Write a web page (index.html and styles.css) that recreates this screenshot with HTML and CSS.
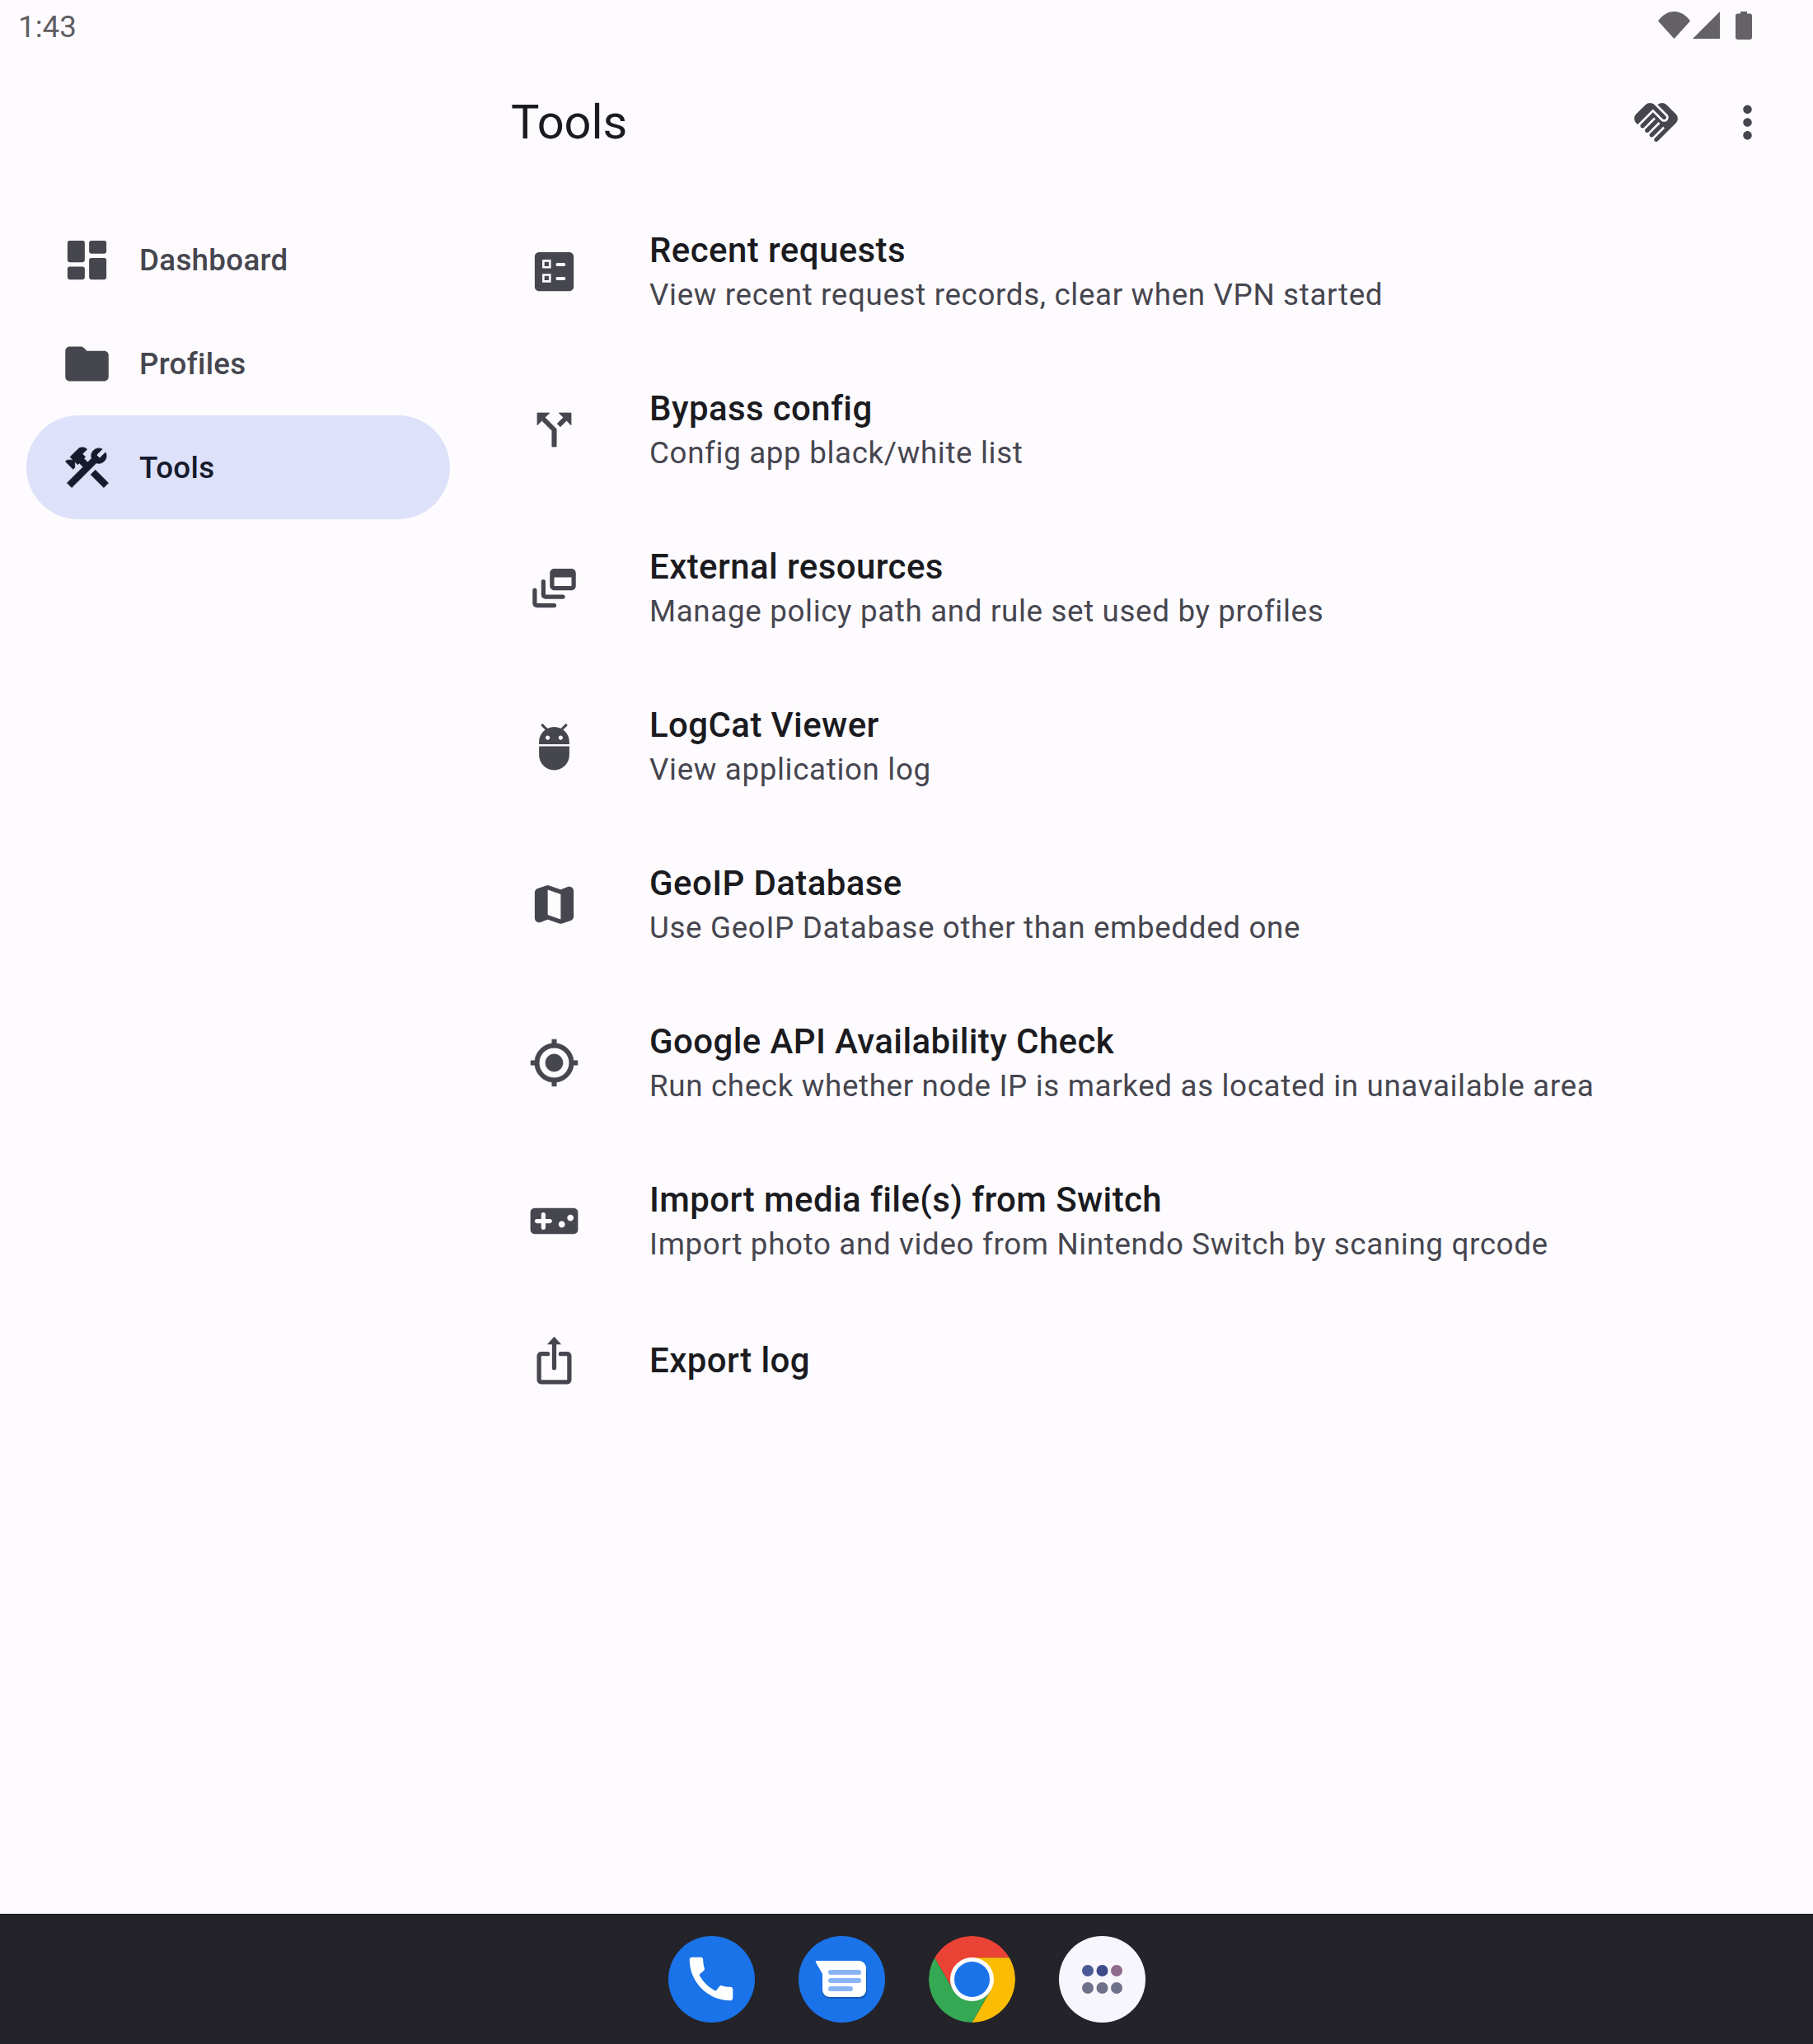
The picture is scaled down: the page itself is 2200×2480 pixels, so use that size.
FILE: index.html
```html
<!DOCTYPE html>
<html lang="en">
<head>
<meta charset="utf-8">
<title>Tools</title>
<link rel="stylesheet" href="styles.css">
</head>
<body>
<div class="screen">
  <header class="status">
    <span class="clock">1:43</span>
    <div class="status-icons">
      <svg class="st-wifi" viewBox="0 0 39 33"><path d="M0 11.5C5 4.500 11.500 0 19.500 0S34 4.500 39 11.500L19.500 33z"/></svg>
      <svg class="st-signal" viewBox="0 0 33 33"><path d="M33 0v33H0z"/></svg>
      <svg class="st-battery" viewBox="0 0 20 34"><path d="M6 0h8v2.500h3.500c1.400 0 2.500 1.100 2.500 2.500v26.500c0 1.400-1.100 2.500-2.500 2.500h-15C1.100 34 0 32.900 0 31.500V5c0-1.400 1.100-2.500 2.500-2.500H6z"/></svg>
    </div>
  </header>
  <div class="main">
    <nav class="rail">
      <a class="nav-item">
        <svg class="icon" viewBox="0 0 24 24"><path d="M4 13h6c.55 0 1-.45 1-1V4c0-.55-.45-1-1-1H4c-.55 0-1 .45-1 1v8c0 .55.45 1 1 1zm0 8h6c.55 0 1-.45 1-1v-4c0-.55-.45-1-1-1H4c-.55 0-1 .45-1 1v4c0 .55.45 1 1 1zm10 0h6c.55 0 1-.45 1-1v-8c0-.55-.45-1-1-1h-6c-.55 0-1 .45-1 1v8c0 .55.45 1 1 1zM13 4v4c0 .55.45 1 1 1h6c.55 0 1-.45 1-1V4c0-.55-.45-1-1-1h-6c-.55 0-1 .45-1 1z"/></svg>
        <span>Dashboard</span>
      </a>
      <a class="nav-item">
        <svg class="icon" viewBox="0 0 24 24"><path d="M10.590 4.590C10.210 4.210 9.700 4 9.170 4H4c-1.100 0-1.990.9-1.990 2L2 18c0 1.100.9 2 2 2h16c1.100 0 2-.9 2-2V8c0-1.100-.9-2-2-2h-8l-1.410-1.410z"/></svg>
        <span>Profiles</span>
      </a>
      <a class="nav-item active">
        <svg class="icon rounded" viewBox="0 0 24 24"><path d="M13.783 15.172l2.121-2.121 5.996 5.996-2.121 2.121zM17.500 10c1.930 0 3.500-1.570 3.500-3.500 0-.58-.16-1.120-.41-1.600l-2.700 2.700-1.490-1.490 2.700-2.700c-.48-.25-1.020-.41-1.600-.41C15.570 3 14 4.570 14 6.500c0 .41.08.8.21 1.160l-1.850 1.850-1.780-1.780.71-.71-1.410-1.410L12 3.490c-1.170-1.170-3.070-1.170-4.240 0L4.220 7.030l1.410 1.410H2.810l-.71.71 3.540 3.540.71-.71V9.150l1.410 1.410.71-.71 1.780 1.780-7.410 7.410 2.120 2.120L16.340 9.790c.36.13.75.21 1.160.21z"/></svg>
        <span>Tools</span>
      </a>
    </nav>
    <div class="content">
      <div class="appbar">
        <h1 class="page-title">Tools</h1>
        <svg class="icon action-hand" viewBox="0 0 24 24"><path d="M16.480 10.410c-.39.39-1.040.39-1.430 0l-4.470-4.460-7.050 7.040-.66-.63c-1.170-1.170-1.170-3.070 0-4.240l4.240-4.240c1.170-1.170 3.070-1.170 4.240 0L16.480 9c.4.39.4 1.020 0 1.410zM17.180 8.290c.78.78.78 2.050 0 2.830-1.270 1.270-2.610.22-2.830 0l-3.760-3.760-5.570 5.570c-.39.39-.39 1.020 0 1.410.39.39 1.020.39 1.420 0l4.620-4.620.71.71-4.620 4.620c-.39.39-.39 1.020 0 1.410.39.39 1.020.39 1.420 0l4.620-4.620.71.71-4.620 4.620c-.39.39-.39 1.020 0 1.410.39.39 1.020.39 1.410 0l4.620-4.620.71.71-4.620 4.620c-.39.39-.39 1.020 0 1.410.39.39 1.020.39 1.410 0l8.320-8.340c1.170-1.170 1.170-3.070 0-4.240l-4.240-4.240c-1.150-1.150-3.010-1.170-4.180-.06L17.180 8.290z"/></svg>
        <svg class="icon action-more" viewBox="0 0 24 24"><path d="M12 8c1.100 0 2-.9 2-2s-.9-2-2-2-2 .9-2 2 .9 2 2 2zm0 2c-1.100 0-2 .9-2 2s.9 2 2 2 2-.9 2-2-.9-2-2-2zm0 6c-1.100 0-2 .9-2 2s.9 2 2 2 2-.9 2-2-.9-2-2-2z"/></svg>
      </div>
      <ul class="list">
        <li class="row">
          <svg class="icon" viewBox="0 0 24 24"><path fill-rule="evenodd" d="M5 3h14c1.100 0 2 .9 2 2v14c0 1.100-.9 2-2 2H5c-1.100 0-2-.9-2-2V5c0-1.100.9-2 2-2zm1.500 3.500v4h4v-4zm1 1h2v2h-2zm-1 5.500v4h4v-4zm1 1h2v2h-2zM13.500 8a.75.75 0 0 0 0 1.500h3a.75.75 0 0 0 0-1.500zm0 6.500a.75.75 0 0 0 0 1.500h3a.75.75 0 0 0 0-1.500z"/></svg>
          <div class="text"><div class="title">Recent requests</div><div class="sub">View recent request records, clear when VPN started</div></div>
        </li>
        <li class="row">
          <svg class="icon rounded" viewBox="0 0 24 24"><path d="M14.200 4.200l2.090 2.090-2.880 2.880 1.420 1.420 2.880-2.880L19.800 9.800V4.200zM9.800 4.200H4.200v5.600l2.090-2.090 4.710 4.700V19.800h2v-8.210l-5.290-5.300L9.800 4.200z"/></svg>
          <div class="text"><div class="title">Bypass config</div><div class="sub">Config app black/white list</div></div>
        </li>
        <li class="row">
          <svg class="icon" viewBox="0 0 24 24"><path fill-rule="evenodd" d="M12 3h8c1.100 0 2 .9 2 2v6c0 1.100-.9 2-2 2h-8c-1.100 0-2-.9-2-2V5c0-1.100.9-2 2-2zm0 4v4h8V7z"/><path class="line" d="M7 9v6c0 .6.4 1 1 1h8"/><path class="line" d="M3 13v6c0 .6.4 1 1 1h8"/></svg>
          <div class="text"><div class="title">External resources</div><div class="sub">Manage policy path and rule set used by profiles</div></div>
        </li>
        <li class="row">
          <svg class="icon" viewBox="0 0 24 24"><path d="M5 16c0 3.870 3.130 7 7 7s7-3.130 7-7v-4H5v4zM16.120 4.370l2.100-2.100-.82-.83-2.300 2.310C14.160 3.280 13.120 3 12 3s-2.160.28-3.090.75L6.600 1.440l-.82.83 2.100 2.100C6.140 5.640 5 7.680 5 10v1h14v-1c0-2.320-1.140-4.360-2.880-5.630zM9 9c-.55 0-1-.45-1-1s.45-1 1-1 1 .45 1 1-.45 1-1 1zm6 0c-.55 0-1-.45-1-1s.45-1 1-1 1 .45 1 1-.45 1-1 1z"/></svg>
          <div class="text"><div class="title">LogCat Viewer</div><div class="sub">View application log</div></div>
        </li>
        <li class="row">
          <svg class="icon" viewBox="0 0 24 24"><path fill-rule="evenodd" d="M14.650 4.980l-5-1.750c-.42-.15-.88-.15-1.300-.01L4.360 4.560C3.550 4.840 3 5.600 3 6.460v11.850c0 1.410 1.410 2.370 2.720 1.860l2.930-1.140c.22-.09.47-.09.69-.01l5 1.750c.42.15.88.15 1.300.01l3.990-1.340c.81-.27 1.360-1.040 1.360-1.900V5.690c0-1.410-1.410-2.370-2.720-1.860l-2.930 1.140c-.22.08-.46.09-.69.01zM15 18.890l-6-2.110V5.110l6 2.110v11.670z"/></svg>
          <div class="text"><div class="title">GeoIP Database</div><div class="sub">Use GeoIP Database other than embedded one</div></div>
        </li>
        <li class="row">
          <svg class="icon rounded" viewBox="0 0 24 24"><path d="M12 8c-2.210 0-4 1.790-4 4s1.790 4 4 4 4-1.790 4-4-1.790-4-4-4zm8.940 3c-.46-4.170-3.770-7.480-7.940-7.940V1.200h-2v1.860C6.830 3.520 3.520 6.830 3.060 11H1.200v2h1.860c.46 4.170 3.770 7.480 7.940 7.940v1.860h2v-1.860c4.170-.46 7.480-3.770 7.940-7.940h1.860v-2h-1.860zM12 19c-3.870 0-7-3.130-7-7s3.130-7 7-7 7 3.130 7 7-3.130 7-7 7z"/></svg>
          <div class="text"><div class="title">Google API Availability Check</div><div class="sub">Run check whether node IP is marked as located in unavailable area</div></div>
        </li>
        <li class="row">
          <svg class="icon" viewBox="0 0 24 24"><path d="M21 6H3c-1.100 0-2 .9-2 2v8c0 1.100.9 2 2 2h18c1.100 0 2-.9 2-2V8c0-1.100-.9-2-2-2zm-11 7H8v2c0 .55-.45 1-1 1s-1-.45-1-1v-2H4c-.55 0-1-.45-1-1s.45-1 1-1h2V9c0-.55.45-1 1-1s1 .45 1 1v2h2c.55 0 1 .45 1 1s-.45 1-1 1zm5.500 2c-.83 0-1.500-.67-1.500-1.500s.67-1.500 1.500-1.500 1.500.67 1.500 1.500-.67 1.500-1.500 1.500zm4-3c-.83 0-1.500-.67-1.500-1.500S18.670 9 19.500 9s1.500.67 1.500 1.500-.67 1.500-1.500 1.500z"/></svg>
          <div class="text"><div class="title">Import media file(s) from Switch</div><div class="sub">Import photo and video from Nintendo Switch by scaning qrcode</div></div>
        </li>
        <li class="row">
          <svg class="icon" viewBox="0 0 24 24"><path class="line" d="M12 15.500V3"/><path d="M8.700 4.700L12 1l3.300 3.700z"/><path class="line" d="M9 9H6c-.6 0-1 .4-1 1v11c0 .6.4 1 1 1h12c.6 0 1-.4 1-1V10c0-.6-.4-1-1-1h-3"/></svg>
          <div class="text"><div class="title">Export log</div></div>
        </li>
      </ul>
    </div>
  </div>
  <footer class="dock">
    <div class="app app-blue">
      <svg class="dock-glyph" viewBox="0 0 24 24"><path d="M20.010 15.380c-1.230 0-2.420-.2-3.530-.56a.977.977 0 0 0-1.010.24l-1.570 1.970c-2.830-1.350-5.480-3.900-6.890-6.830l1.950-1.660c.27-.28.35-.67.24-1.020-.37-1.110-.56-2.300-.56-3.530 0-.54-.45-.99-.99-.99H4.190C3.650 3 3 3.240 3 3.990 3 13.280 10.730 21 20.010 21c.71 0 .99-.63.99-1.180v-3.450c0-.54-.45-.99-.99-.99z"/></svg>
    </div>
    <div class="app app-blue">
      <svg class="dock-msg" viewBox="0 0 62 44"><path class="msg-shadow" d="M8 6h46c4 0 8 4 8 8v24c0 4-3 8-8 8H16c-4 0-8-4-8-8V18z"/><path class="msg-body" d="M1 0h51c5 0 9 4 9 9v26c0 5-4 9-9 9H17c-5 0-9-4-9-9V16L0 2c-.5-1 0-2 1-2z"/><rect class="msg-bar" x="15" y="11" width="40" height="6" rx="3"/><rect class="msg-bar" x="15" y="21" width="40" height="6" rx="3"/><rect class="msg-bar" x="15" y="31" width="30" height="6" rx="3"/></svg>
    </div>
    <div class="app">
      <svg class="dock-full" viewBox="-52.500 -52.500 105 105">
        <path class="ch-red" d="M-45.470-26.250A52.500 52.500 0 0 1 45.470-26.250L0-26.250-22.730 13.120z"/>
        <path class="ch-yellow" transform="rotate(120)" d="M-45.470-26.250A52.500 52.500 0 0 1 45.470-26.250L0-26.250-22.730 13.120z"/>
        <path class="ch-green" transform="rotate(240)" d="M-45.470-26.250A52.500 52.500 0 0 1 45.470-26.250L0-26.250-22.730 13.120z"/>
        <circle class="ch-white" r="26.500"/><circle class="ch-blue" r="21.500"/>
      </svg>
    </div>
    <div class="app app-light">
      <svg class="dock-full" viewBox="-52.500 -52.500 105 105">
        <circle class="d1" cx="-17.500" cy="-10.500" r="7"/><circle class="d2" cy="-10.500" r="7"/><circle class="d3" cx="17.500" cy="-10.500" r="7"/>
        <circle class="d4" cx="-17.500" cy="10.500" r="7"/><circle class="d4" cy="10.500" r="7"/><circle class="d4" cx="17.500" cy="10.500" r="7"/>
      </svg>
    </div>
  </footer>
</div>
</body>
</html>
```

FILE: styles.css
```css
* { box-sizing: border-box; }
html, body { margin: 0; padding: 0; }
body { background: #fefbff; font-family: Roboto, "Noto Sans", sans-serif; color: #1b1b1f; }
.screen { width: 2200px; height: 2480px; display: flex; flex-direction: column; overflow: hidden; }

.status { height: 66px; display: flex; justify-content: space-between; padding: 14px 74px 0 22px; flex: none; }
.clock { font-size: 36.750px; line-height: 38px; color: #5f5e62; }
.status-icons { display: flex; align-items: flex-start; }
.status-icons svg { fill: #646266; display: block; }
.st-wifi { width: 39px; height: 33px; }
.st-signal { width: 33px; height: 33px; margin-left: 3px; }
.st-battery { width: 20px; height: 34px; margin-left: 19px; }

.main { flex: 1; display: flex; min-height: 0; }
.rail { width: 578px; flex: none; padding: 186px 32px 0; display: flex; flex-direction: column; }
.nav-item { height: 126px; width: 514px; border-radius: 63px; display: flex; align-items: center; padding-left: 42px; gap: 32px; font-size: 36.750px; font-weight: 500; letter-spacing: .3px; color: #46464f; }
.nav-item.active { background: #dde1f9; color: #171a2c; }
.nav-item.active .icon { fill: #171a2c; stroke: #171a2c; }

.icon { width: 63px; height: 63px; flex: none; fill: #46464f; display: block; }
.icon.rounded { stroke: #46464f; stroke-width: .3; stroke-linejoin: round; }
.icon .line { fill: none; stroke: #46464f; stroke-width: 2; stroke-linecap: round; stroke-linejoin: round; }

.content { flex: 1; min-width: 0; display: flex; flex-direction: column; }
.appbar { height: 164px; flex: none; display: flex; align-items: center; padding: 0 48px 0 42px; }
.page-title { margin: 0; flex: 1; font-size: 57.750px; font-weight: 400; color: #1b1b1f; }
.action-hand { margin-right: 48px; }

.list { list-style: none; margin: 0; padding: 0; }
.row { display: flex; padding: 45px 0 39px 63px; align-items: center; gap: 84px; }
.title { font-size: 42px; font-weight: 500; line-height: 58px; letter-spacing: .4px; color: #1b1b1f; }
.sub { font-size: 36.750px; line-height: 50px; letter-spacing: .65px; color: #46464f; }

.dock { height: 158px; flex: none; background: #242329; display: flex; justify-content: center; align-items: center; gap: 53px; }
.app { width: 105px; height: 105px; border-radius: 50%; display: flex; align-items: center; justify-content: center; overflow: hidden; }
.app-blue { background: #1a73e8; }
.app-light { background: #f8f6fd; }
.dock-glyph { width: 70px; height: 70px; fill: #fff; }
.dock-msg { width: 62px; height: 46px; overflow: visible; }
.dock-full { width: 105px; height: 105px; display: block; }
.msg-shadow { fill: #1559b8; }
.msg-body { fill: #fff; }
.msg-bar { fill: #8ab4f8; }
.ch-red { fill: #ea4335; }
.ch-yellow { fill: #fbbc04; }
.ch-green { fill: #34a853; }
.ch-white { fill: #fff; }
.ch-blue { fill: #1a73e8; }
.d1 { fill: #4a5a96; }
.d2 { fill: #3f4a88; }
.d3 { fill: #8f6a8c; }
.d4 { fill: #6f7089; }
```
